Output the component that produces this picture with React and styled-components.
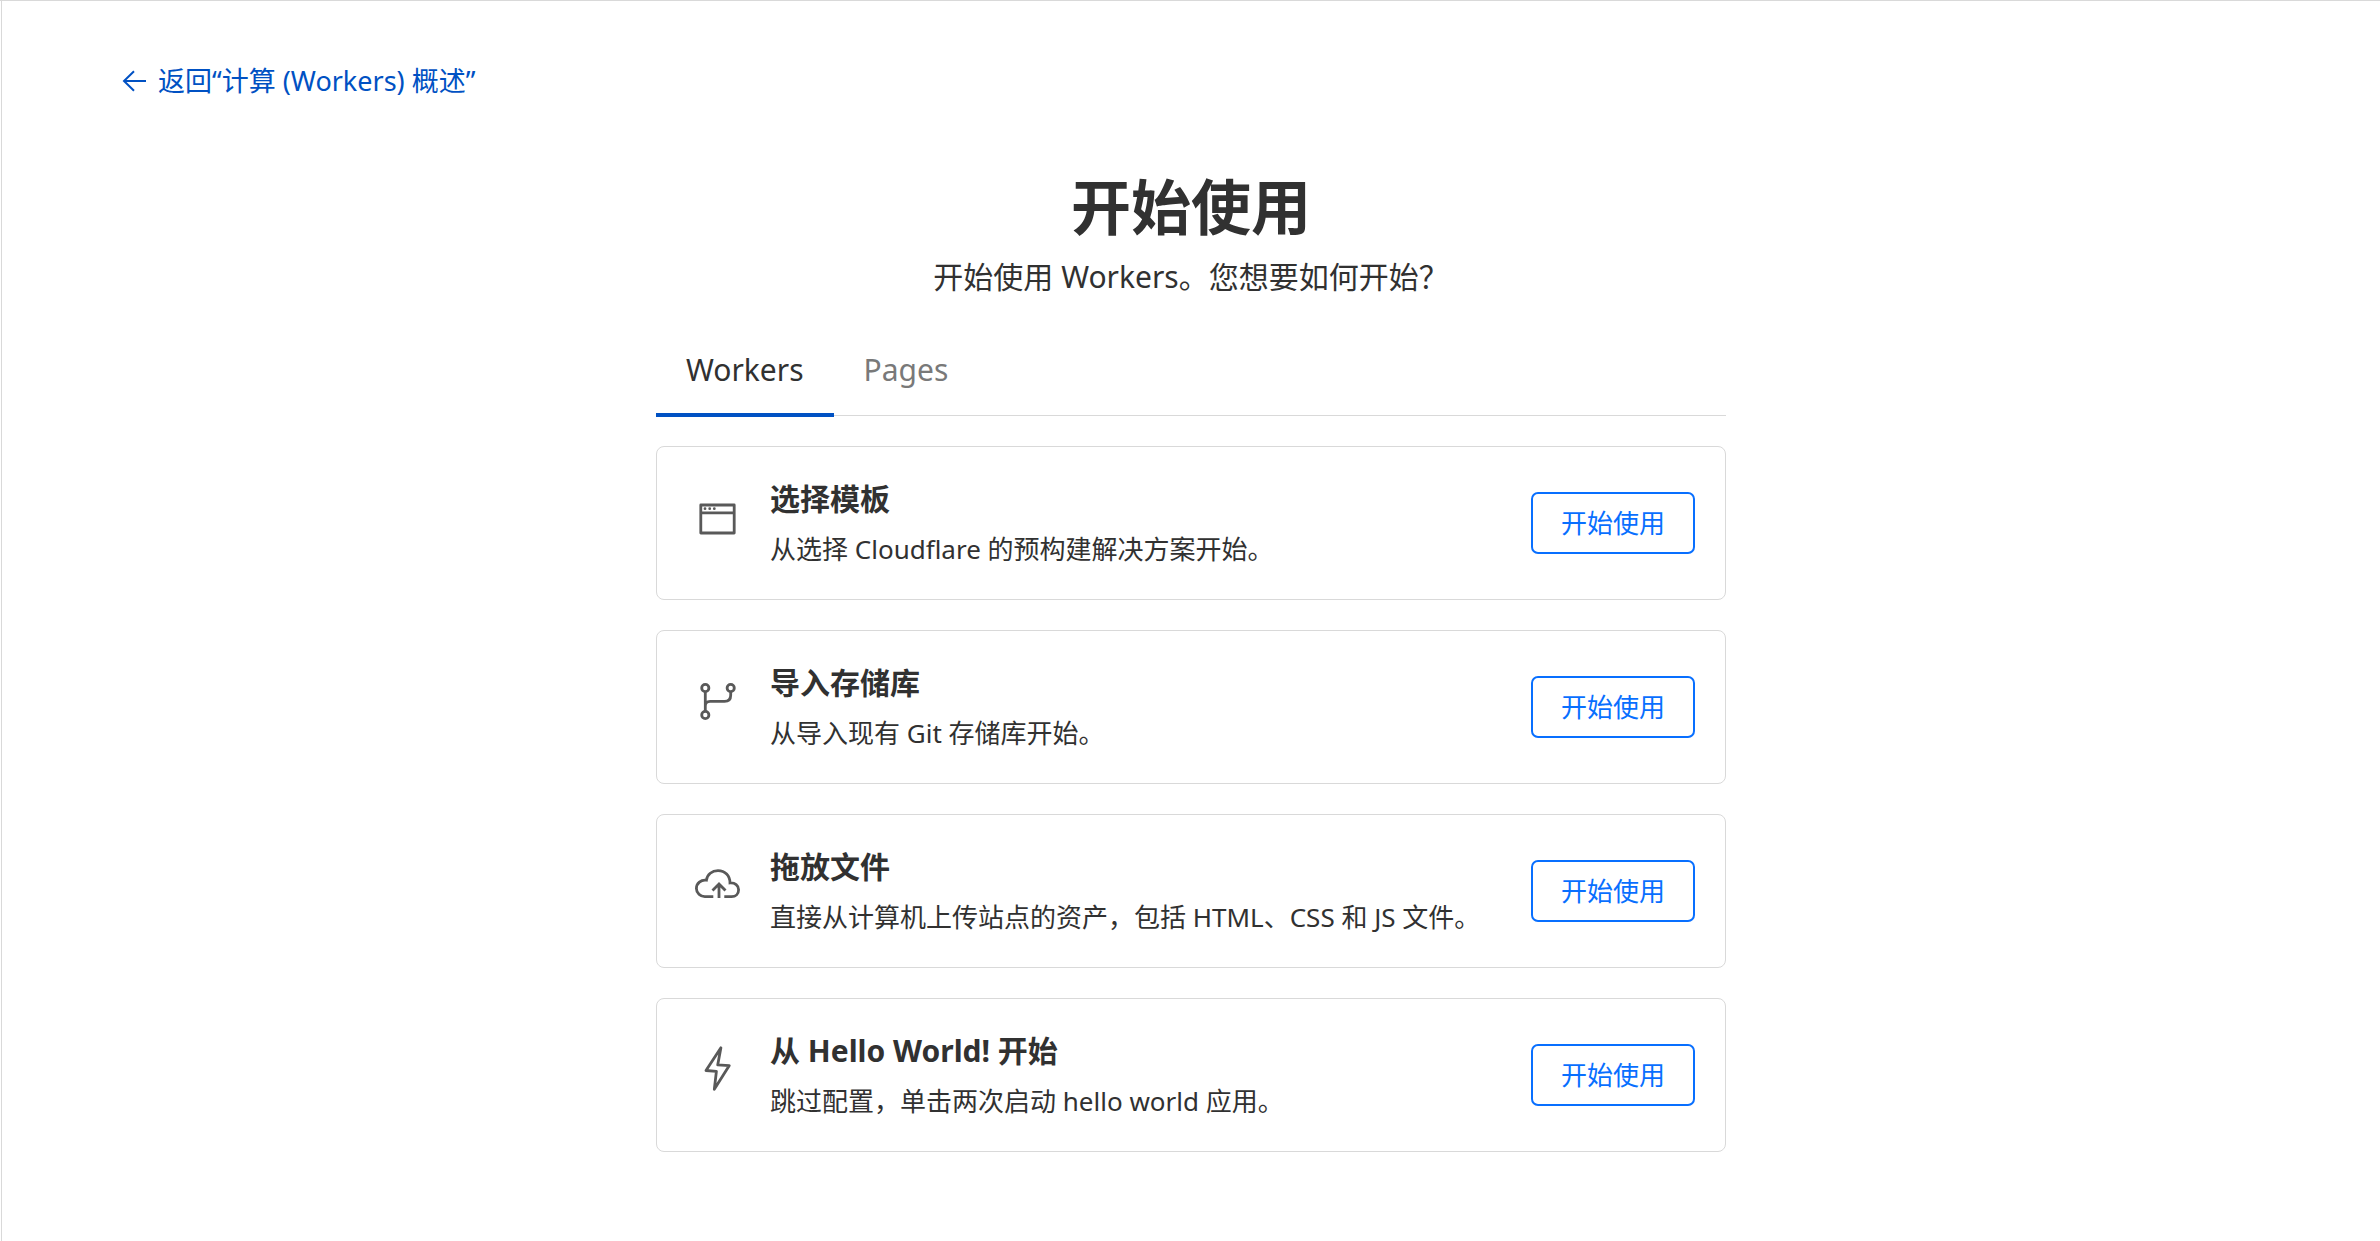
import React, { useState } from "react";
import styled, { createGlobalStyle } from "styled-components";

const GlobalStyle = createGlobalStyle`
  *, *::before, *::after { box-sizing: border-box; }
  body {
    margin: 0;
    background: #fff;
    color: #313131;
    font-family: "Noto Sans", "Noto Sans CJK SC", sans-serif;
    font-size: 26px;
    line-height: 40px;
  }
  button { font: inherit; cursor: pointer; }
`;

const Shell = styled.div`
  display: flex;
  min-height: 100vh;
  padding-left: 1px;
  border-top: 1px solid #d9d9d9;
`;

const Page = styled.div`
  flex: 1;
  border-left: 1px solid #d9d9d9;
  padding: 60px 120px;
`;

const BackLink = styled.a`
  display: flex;
  width: fit-content;
  align-items: center;
  gap: 12px;
  color: #0051c3;
  font-size: 27px;
  text-decoration: none;
`;

const Content = styled.main`
  max-width: 1070px;
  margin: 64px auto 0;
`;

const Header = styled.header`
  text-align: center;
`;

const Title = styled.h1`
  margin: 0 0 4px;
  font-size: 60px;
  line-height: 84px;
  font-weight: 700;
`;

const Subtitle = styled.p`
  margin: 0;
  font-size: 30px;
  line-height: 48px;
`;

const Tabs = styled.div`
  display: flex;
  margin: 40px 0 30px;
  border-bottom: 1px solid #d9d9d9;
`;

const Tab = styled.button`
  margin-bottom: -2px;
  padding: 7px 30px 21px;
  border: 0;
  border-bottom: 4px solid ${(p) => (p.$active ? "#0051c3" : "transparent")};
  background: none;
  color: ${(p) => (p.$active ? "#313131" : "#797979")};
  font-size: 30px;
  line-height: 44px;
`;

const CardList = styled.ul`
  display: grid;
  gap: 30px;
  margin: 0;
  padding: 0;
  list-style: none;
`;

const Card = styled.li`
  display: flex;
  align-items: center;
  gap: 30px;
  padding: 28px 30px 28px 38px;
  border: 1px solid #d9d9d9;
  border-radius: 8px;
`;

const IconBox = styled.span`
  display: flex;
  flex: none;
  padding-bottom: 12px;
  color: #595959;
`;

const CardText = styled.div`
  flex: 1;
  min-width: 0;
`;

const CardTitle = styled.h2`
  margin: 0 0 4px;
  font-size: 30px;
  line-height: 48px;
  font-weight: 700;
`;

const CardDescription = styled.p`
  margin: 0;
  line-height: 44px;
`;

const StartButton = styled.button`
  flex: none;
  padding: 10px 28px;
  border: 2px solid #086fff;
  border-radius: 7px;
  background: #fff;
  color: #086fff;
  line-height: 38px;
`;

const iconProps = {
  width: 45,
  height: 45,
  viewBox: "0 0 45 45",
  fill: "none",
  stroke: "currentColor",
  strokeWidth: 2.8,
  overflow: "visible",
  "aria-hidden": true,
};

const ArrowLeftIcon = () => (
  <svg width="24" height="22" viewBox="0 0 24 22" fill="none" stroke="currentColor" strokeWidth="2" aria-hidden="true">
    <path d="M24 11H2M12 1.2L2 11l10 9.8" />
  </svg>
);

const WindowIcon = () => (
  <svg {...iconProps} strokeLinejoin="round">
    <path d="M5.8 10h33.4v28H5.8zM5.8 17.8h33.4" />
    <g fill="currentColor" stroke="none">
      <circle cx="10" cy="13.7" r="1.4" />
      <circle cx="14.7" cy="13.7" r="1.4" />
      <circle cx="19.3" cy="13.7" r="1.4" />
    </g>
  </svg>
);

const BranchIcon = () => (
  <svg {...iconProps}>
    <circle cx="10.3" cy="9" r="3.6" />
    <circle cx="35.7" cy="9" r="3.6" />
    <circle cx="10.3" cy="36" r="3.6" />
    <path d="M10.3 12.6v19.8M10.3 27c0-3.2 1.6-4.6 4.8-4.6h14.4c4.2 0 6.2-2.4 6.2-6.2v-3.6" />
  </svg>
);

const CloudIcon = () => (
  <svg {...iconProps}>
    <path d="M18.3 33.7H10A8.4 8.4 0 0 1 1.4 25.4C1.4 20.5 6 16.4 11.4 17.2C12.2 11.5 17 7.6 23 7.6C30 7.6 35 12.5 35 19.9C40 19.5 43.6 22.4 43.6 26.7C43.6 31 40.6 33.7 36.6 33.7H29.3" />
    <path d="M24 35V21.5M17.5 27.6L24 21l6.5 6.6" />
  </svg>
);

const BoltIcon = () => (
  <svg {...iconProps} strokeLinejoin="round">
    <path d="M25.9 .8L22.7 17.9 34.3 18.6 19.3 42.3 21.4 24.3 11 23.5z" />
  </svg>
);

const options = [
  { icon: WindowIcon, title: "选择模板", text: "从选择 Cloudflare 的预构建解决方案开始。" },
  { icon: BranchIcon, title: "导入存储库", text: "从导入现有 Git 存储库开始。" },
  { icon: CloudIcon, title: "拖放文件", text: "直接从计算机上传站点的资产，包括 HTML、CSS 和 JS 文件。" },
  { icon: BoltIcon, title: "从 Hello World! 开始", text: "跳过配置，单击两次启动 hello world 应用。" },
];

export default function App() {
  const [active, setActive] = useState("Workers");

  return (
    <Shell lang="zh-CN">
      <GlobalStyle />
      <Page>
        <BackLink href="#overview">
          <ArrowLeftIcon />
          返回“计算 (Workers) 概述”
        </BackLink>
        <Content>
          <Header>
            <Title>开始使用</Title>
            <Subtitle>开始使用 Workers。您想要如何开始？</Subtitle>
          </Header>
          <Tabs role="tablist">
            {["Workers", "Pages"].map((name) => (
              <Tab
                key={name}
                type="button"
                role="tab"
                aria-selected={name === active}
                $active={name === active}
                onClick={() => setActive(name)}
              >
                {name}
              </Tab>
            ))}
          </Tabs>
          <CardList>
            {options.map(({ icon: Icon, title, text }) => (
              <Card key={title}>
                <IconBox>
                  <Icon />
                </IconBox>
                <CardText>
                  <CardTitle>{title}</CardTitle>
                  <CardDescription>{text}</CardDescription>
                </CardText>
                <StartButton type="button">开始使用</StartButton>
              </Card>
            ))}
          </CardList>
        </Content>
      </Page>
    </Shell>
  );
}
